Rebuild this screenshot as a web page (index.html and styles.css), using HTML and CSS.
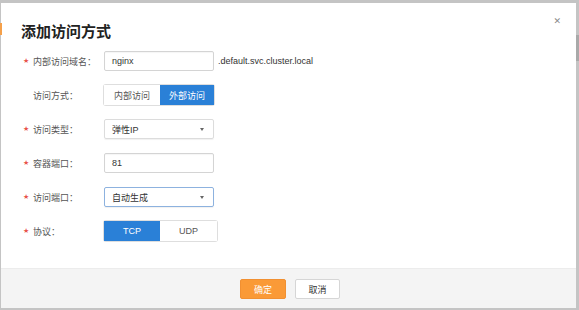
FILE: index.html
```html
<!DOCTYPE html>
<html lang="zh-CN">
<head>
<meta charset="utf-8">
<title>添加访问方式</title>
<link rel="stylesheet" href="styles.css">
</head>
<body>
<div class="tab-mark"></div>
<div class="scroll-thumb"></div>
<div class="dialog">
  <div class="header">
    <h1 class="title">添加访问方式</h1>
    <span class="close">&#x2715;</span>
  </div>
  <div class="form">
    <div class="row">
      <div class="label"><span class="star">★</span>内部访问域名：</div>
      <div class="control">
        <div class="input">nginx</div>
        <span class="suffix">.default.svc.cluster.local</span>
      </div>
    </div>
    <div class="row">
      <div class="label"><span class="star blank"></span>访问方式：</div>
      <div class="control">
        <div class="group">
          <span class="seg w56">内部访问</span>
          <span class="seg w54 on">外部访问</span>
        </div>
      </div>
    </div>
    <div class="row">
      <div class="label"><span class="star">★</span>访问类型：</div>
      <div class="control">
        <div class="input select">弹性IP<span class="caret"></span></div>
      </div>
    </div>
    <div class="row">
      <div class="label"><span class="star">★</span>容器端口：</div>
      <div class="control">
        <div class="input">81</div>
      </div>
    </div>
    <div class="row">
      <div class="label"><span class="star">★</span>访问端口：</div>
      <div class="control">
        <div class="input select focus">自动生成<span class="caret"></span></div>
      </div>
    </div>
    <div class="row">
      <div class="label"><span class="star">★</span>协议：</div>
      <div class="control">
        <div class="group">
          <span class="seg w56 on">TCP</span>
          <span class="seg w57">UDP</span>
        </div>
      </div>
    </div>
  </div>
  <div class="footer">
    <span class="btn primary">确定</span>
    <span class="btn">取消</span>
  </div>
</div>
</body>
</html>
```
FILE: styles.css
```css
html, body {
  margin: 0;
  padding: 0;
}
body {
  width: 579px;
  height: 310px;
  overflow: hidden;
  background: #c4c4c4;
  font-family: "Liberation Sans", "Noto Sans CJK SC", sans-serif;
  font-size: 9px;
  color: #333;
  position: relative;
  padding-top: 3px;
  box-sizing: border-box;
}
.tab-mark {
  position: absolute;
  left: 0;
  top: 23px;
  width: 2px;
  height: 12px;
  background: #f5a04a;
  z-index: 2;
}
.scroll-thumb {
  position: absolute;
  right: 0;
  top: 35px;
  width: 3px;
  height: 26px;
  background: #a9a9a9;
}
.dialog {
  margin: 0 3px 0 1px;
  height: 305px;
  background: #fff;
  display: flex;
  flex-direction: column;
  position: relative;
}
.header {
  padding: 18px 20px 0 20px;
}
.title {
  margin: 0;
  font-family: "Noto Sans CJK SC", sans-serif;
  font-size: 15px;
  line-height: 20px;
  font-weight: bold;
  color: #222;
}
.close {
  position: absolute;
  right: 15px;
  top: 13px;
  font-size: 9px;
  color: #8a8a8a;
  font-family: "DejaVu Sans", sans-serif;
}
.form {
  padding: 10px 0 0 21px;
  display: flex;
  flex-direction: column;
  gap: 14px;
}
.row {
  display: flex;
  align-items: center;
  height: 20px;
}
.label {
  width: 82px;
  display: flex;
  align-items: center;
  font-family: "Noto Sans CJK SC", sans-serif;
  color: #555;
  font-size: 9px;
}
.star {
  width: 11px;
  color: #e8534a;
  font-size: 7px;
  font-family: "DejaVu Sans", sans-serif;
  padding-left: 1px;
  box-sizing: border-box;
}
.control {
  display: flex;
  align-items: center;
}
.input {
  width: 110px;
  height: 20px;
  box-sizing: border-box;
  border: 1px solid #d4d4d4;
  border-radius: 2px;
  box-shadow: inset 0 1px 1px rgba(0,0,0,0.04);
  padding: 0 7px;
  display: flex;
  align-items: center;
  font-family: "Liberation Sans", "Noto Sans CJK SC", sans-serif;
  color: #333;
  position: relative;
}
.select {
  justify-content: space-between;
  box-shadow: 0 1px 1px rgba(0,0,0,0.06);
  border-color: #dcdcdc;
}
.select.focus {
  border-color: #8db2df;
}
.caret {
  width: 0;
  height: 0;
  border-left: 2.5px solid transparent;
  border-right: 2.5px solid transparent;
  border-top: 3px solid #666;
  margin-right: 2px;
}
.suffix {
  margin-left: 4px;
  color: #333;
}
.group {
  display: flex;
  height: 20px;
  border-radius: 2px;
  box-shadow: 0 0 0 1px #dedede;
}
.seg {
  height: 20px;
  display: flex;
  align-items: center;
  justify-content: center;
  background: #fff;
  color: #555;
  font-family: "Liberation Sans", "Noto Sans CJK SC", sans-serif;
}
.seg.on {
  background: #2a80d7;
  color: #fff;
}
.w56 { width: 56px; }
.w54 { width: 54px; }
.w57 { width: 57px; }
.footer {
  margin-top: auto;
  height: 40px;
  box-sizing: border-box;
  background: #f4f4f4;
  border-top: 1px solid #ececec;
  display: flex;
  justify-content: center;
  align-items: flex-start;
  gap: 9px;
  padding: 10px 0 0 3px;
}
.btn {
  width: 45px;
  height: 20px;
  box-sizing: border-box;
  border: 1px solid #d6d6d6;
  border-radius: 2px;
  background: #fff;
  display: flex;
  align-items: center;
  justify-content: center;
  font-family: "Noto Sans CJK SC", sans-serif;
  color: #333;
}
.btn.primary {
  width: 46px;
  background: #fa9a37;
  border-color: #f19032;
  color: #fff;
}
```
